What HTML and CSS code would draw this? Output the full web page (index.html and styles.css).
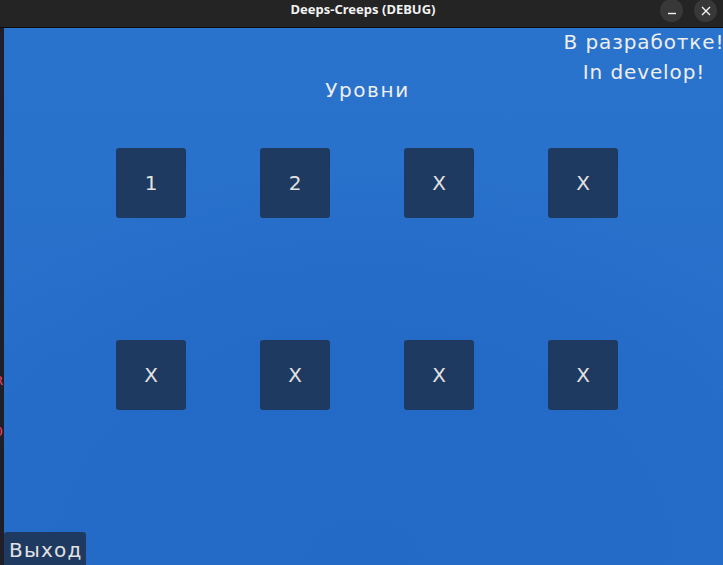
FILE: index.html
```html
<!DOCTYPE html>
<html lang="ru">
<head>
<meta charset="utf-8">
<title>Deeps-Creeps (DEBUG)</title>
<link rel="stylesheet" href="styles.css">
</head>
<body>
<div class="window">
  <header class="titlebar">
    <div class="title">Deeps-Creeps (DEBUG)</div>
    <div class="controls">
      <span class="ctl"><svg width="12" height="12" viewBox="0 0 12 12"><path d="M2 8.5h8" stroke="#f2f2f2" stroke-width="1.4"/></svg></span>
      <span class="ctl"><svg width="12" height="12" viewBox="0 0 12 12"><path d="M2 2l8 8M10 2l-8 8" stroke="#f2f2f2" stroke-width="1.4"/></svg></span>
    </div>
  </header>
  <div class="body">
    <aside class="strip">
      <span class="ghost g1">R</span>
      <span class="ghost g2">0</span>
    </aside>
    <main class="game">
      <div class="note">В разработке!<br>In develop!</div>
      <h1 class="heading">Уровни</h1>
      <div class="levels">
        <button class="lvl">1</button>
        <button class="lvl">2</button>
        <button class="lvl">X</button>
        <button class="lvl">X</button>
        <button class="lvl">X</button>
        <button class="lvl">X</button>
        <button class="lvl">X</button>
        <button class="lvl">X</button>
      </div>
      <div class="spacer"></div>
      <button class="exit">Выход</button>
    </main>
  </div>
</div>
</body>
</html>
```
FILE: styles.css
```css
* { box-sizing: border-box; }
html, body { margin: 0; padding: 0; }
body {
  width: 723px;
  height: 565px;
  overflow: hidden;
  background: #222222;
}
.window {
  width: 723px;
  height: 565px;
  display: flex;
  flex-direction: column;
  overflow: hidden;
}
.titlebar {
  height: 28px;
  flex: none;
  background: #242424;
  border-bottom: 1px solid #0c0c0c;
  position: relative;
  display: flex;
  align-items: center;
  justify-content: center;
}
.title {
  font-family: "Noto Sans", "DejaVu Sans", sans-serif;
  font-weight: 700;
  font-size: 13px;
  color: #f2f2f2;
  margin-top: -9px;
  margin-left: 3px;
}
.controls {
  position: absolute;
  right: 6px;
  top: -1px;
  display: flex;
  gap: 11px;
}
.ctl {
  width: 23px;
  height: 23px;
  border-radius: 50%;
  background: #383838;
  display: flex;
  align-items: center;
  justify-content: center;
}
.body {
  flex: 1;
  display: flex;
  min-height: 0;
  overflow: hidden;
}
.strip {
  width: 4px;
  flex: none;
  background: #1e1f2a;
  position: relative;
  overflow: hidden;
}
.ghost {
  position: absolute;
  left: -5px;
  font-family: "DejaVu Sans Mono", monospace;
  font-size: 13px;
  color: #ec4862;
}
.g1 { top: 345px; }
.g2 { top: 396px; }
.game {
  flex: 1;
  position: relative;
  overflow: hidden;
  display: flex;
  flex-direction: column;
  align-items: flex-start;
  background:
    radial-gradient(ellipse 70% 75% at 50% 100%, #2369c6 0%, #246bc8 60%, rgba(40,114,204,0) 100%),
    linear-gradient(#2a73cc, #256cc8);
  font-family: "DejaVu Sans", "Liberation Sans", sans-serif;
  color: #ececec;
}
.note {
  position: absolute;
  top: -1px;
  right: -40px;
  width: 238px;
  text-align: center;
  font-size: 20px;
  letter-spacing: 0.9px;
  line-height: 30px;
  color: #eeeeee;
}
.heading {
  margin: 49px 0 0 8px;
  align-self: center;
  font-size: 20px;
  letter-spacing: 1.6px;
  font-weight: 400;
  line-height: 26px;
  color: #eeeeee;
}
.levels {
  margin: 45px 0 0 112px;
  display: grid;
  grid-template-columns: repeat(4, 70px);
  grid-auto-rows: 70px;
  column-gap: 74px;
  row-gap: 122px;
}
.lvl {
  border: none;
  border-radius: 3px;
  background: #1e3a61;
  color: #e2e2e2;
  font-family: "DejaVu Sans", "Liberation Sans", sans-serif;
  font-size: 20px;
  padding: 0;
  display: flex;
  align-items: center;
  justify-content: center;
}
.spacer { flex: 1; }
.exit {
  border: none;
  border-radius: 3px 3px 0 0;
  background: #1e3a61;
  color: #e2e2e2;
  font-family: "DejaVu Sans", "Liberation Sans", sans-serif;
  font-size: 20px;
  letter-spacing: 1.2px;
  width: 82px;
  height: 33px;
  padding: 2px 0 0 5px;
  text-align: left;
  line-height: 30px;
  white-space: nowrap;
  overflow: hidden;
}
```
